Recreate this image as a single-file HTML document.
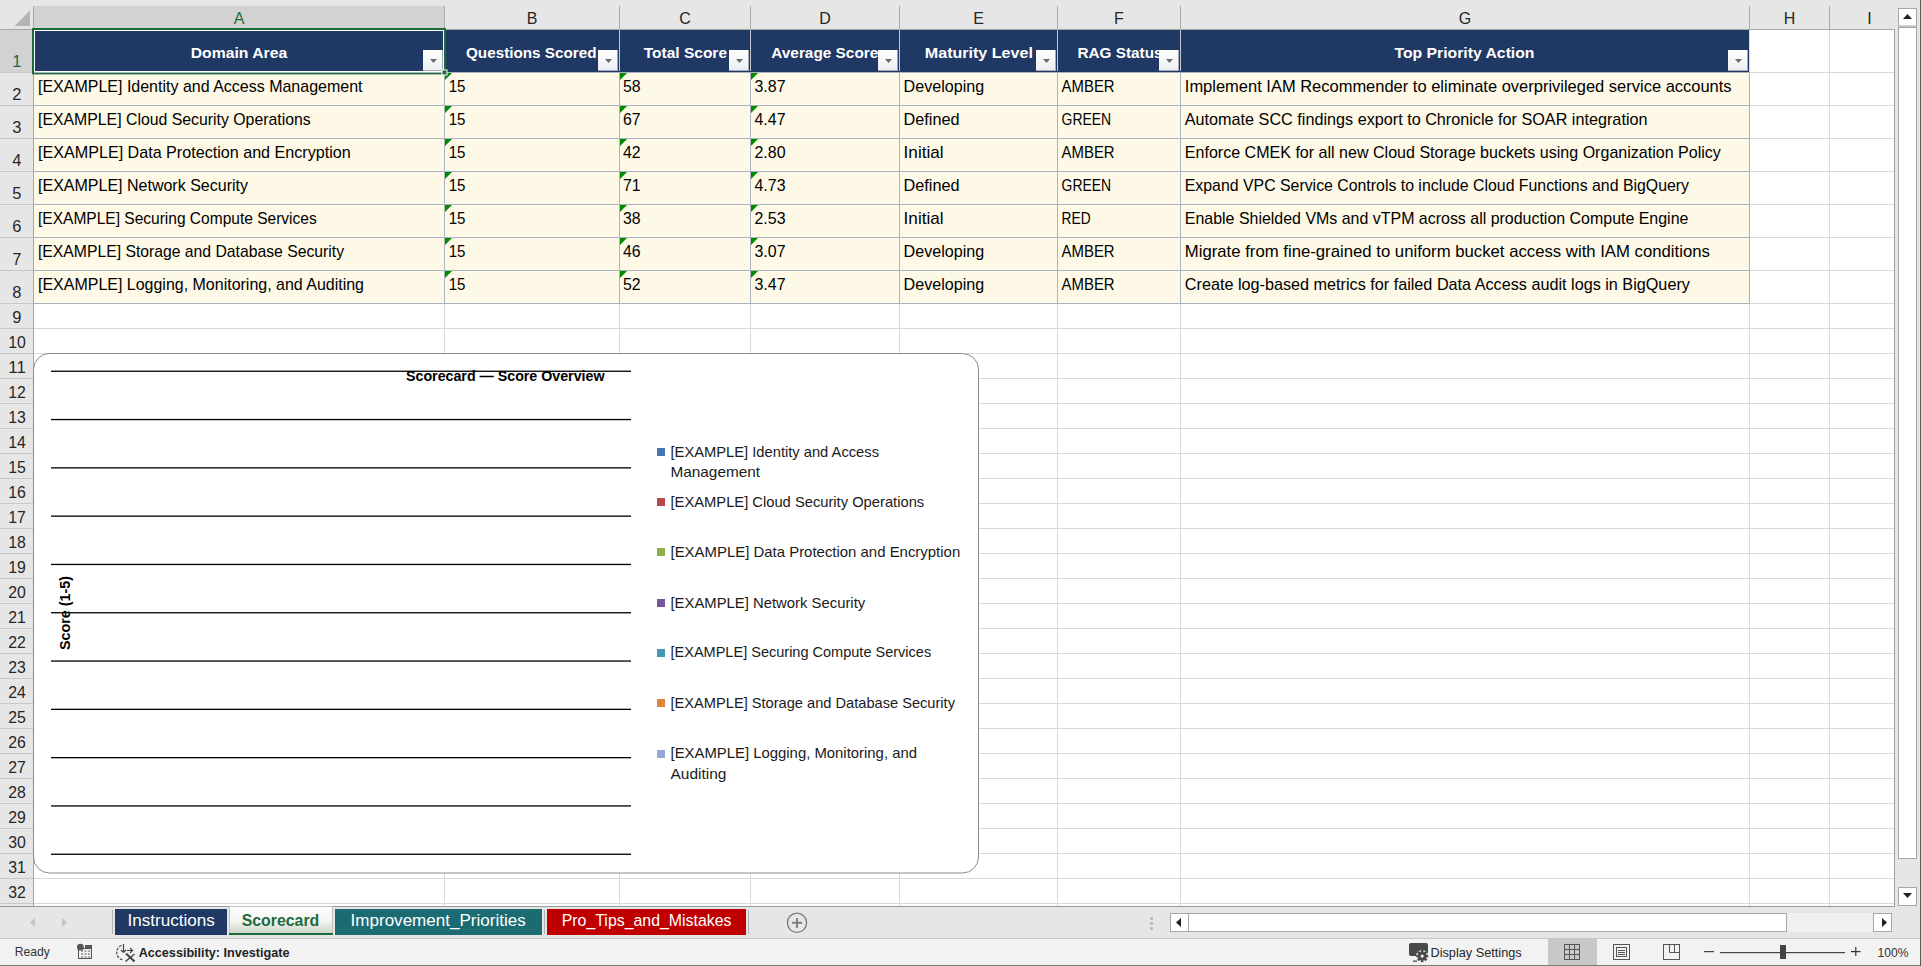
<!DOCTYPE html>
<html><head><meta charset="utf-8"><title>Scorecard</title>
<style>
html,body{margin:0;padding:0;background:#fff;overflow:hidden;}
svg{display:block;font-family:"Liberation Sans",sans-serif;}
</style></head>
<body>
<svg width="1921" height="966" viewBox="0 0 1921 966">
<rect x="0" y="0" width="1921" height="966" fill="#ffffff"/>
<rect x="0" y="0" width="1921" height="29" fill="#e6e6e6"/>
<rect x="34" y="6" width="410" height="23" fill="#d2d2d2"/>
<polygon points="14.5,26 30,26 30,10.5" fill="#b4b4b4"/>
<rect x="0" y="29" width="33" height="877" fill="#e6e6e6"/>
<rect x="0" y="30" width="33" height="42" fill="#d2d2d2"/>
<rect x="444" y="29" width="1" height="877" fill="#dadada"/>
<rect x="619" y="29" width="1" height="877" fill="#dadada"/>
<rect x="750" y="29" width="1" height="877" fill="#dadada"/>
<rect x="899" y="29" width="1" height="877" fill="#dadada"/>
<rect x="1057" y="29" width="1" height="877" fill="#dadada"/>
<rect x="1180" y="29" width="1" height="877" fill="#dadada"/>
<rect x="1749" y="29" width="1" height="877" fill="#dadada"/>
<rect x="1829" y="29" width="1" height="877" fill="#dadada"/>
<rect x="1894" y="29" width="1" height="877" fill="#dadada"/>
<rect x="33" y="72" width="1861" height="1" fill="#dadada"/>
<rect x="33" y="105" width="1861" height="1" fill="#dadada"/>
<rect x="33" y="138" width="1861" height="1" fill="#dadada"/>
<rect x="33" y="171" width="1861" height="1" fill="#dadada"/>
<rect x="33" y="204" width="1861" height="1" fill="#dadada"/>
<rect x="33" y="237" width="1861" height="1" fill="#dadada"/>
<rect x="33" y="270" width="1861" height="1" fill="#dadada"/>
<rect x="33" y="303" width="1861" height="1" fill="#dadada"/>
<rect x="33" y="328" width="1861" height="1" fill="#dadada"/>
<rect x="33" y="353" width="1861" height="1" fill="#dadada"/>
<rect x="33" y="378" width="1861" height="1" fill="#dadada"/>
<rect x="33" y="403" width="1861" height="1" fill="#dadada"/>
<rect x="33" y="428" width="1861" height="1" fill="#dadada"/>
<rect x="33" y="453" width="1861" height="1" fill="#dadada"/>
<rect x="33" y="478" width="1861" height="1" fill="#dadada"/>
<rect x="33" y="503" width="1861" height="1" fill="#dadada"/>
<rect x="33" y="528" width="1861" height="1" fill="#dadada"/>
<rect x="33" y="553" width="1861" height="1" fill="#dadada"/>
<rect x="33" y="578" width="1861" height="1" fill="#dadada"/>
<rect x="33" y="603" width="1861" height="1" fill="#dadada"/>
<rect x="33" y="628" width="1861" height="1" fill="#dadada"/>
<rect x="33" y="653" width="1861" height="1" fill="#dadada"/>
<rect x="33" y="678" width="1861" height="1" fill="#dadada"/>
<rect x="33" y="703" width="1861" height="1" fill="#dadada"/>
<rect x="33" y="728" width="1861" height="1" fill="#dadada"/>
<rect x="33" y="753" width="1861" height="1" fill="#dadada"/>
<rect x="33" y="778" width="1861" height="1" fill="#dadada"/>
<rect x="33" y="803" width="1861" height="1" fill="#dadada"/>
<rect x="33" y="828" width="1861" height="1" fill="#dadada"/>
<rect x="33" y="853" width="1861" height="1" fill="#dadada"/>
<rect x="33" y="878" width="1861" height="1" fill="#dadada"/>
<rect x="33" y="903" width="1861" height="1" fill="#dadada"/>
<rect x="34" y="30" width="1715" height="42" fill="#203864"/>
<rect x="34" y="73" width="1715" height="230" fill="#fef8e6"/>
<rect x="444" y="72" width="1" height="232" fill="#a9b3c1"/>
<rect x="619" y="72" width="1" height="232" fill="#a9b3c1"/>
<rect x="750" y="72" width="1" height="232" fill="#a9b3c1"/>
<rect x="899" y="72" width="1" height="232" fill="#a9b3c1"/>
<rect x="1057" y="72" width="1" height="232" fill="#a9b3c1"/>
<rect x="1180" y="72" width="1" height="232" fill="#a9b3c1"/>
<rect x="1749" y="72" width="1" height="232" fill="#a9b3c1"/>
<rect x="33" y="72" width="1717" height="1" fill="#a9b3c1"/>
<rect x="33" y="105" width="1717" height="1" fill="#a9b3c1"/>
<rect x="33" y="138" width="1717" height="1" fill="#a9b3c1"/>
<rect x="33" y="171" width="1717" height="1" fill="#a9b3c1"/>
<rect x="33" y="204" width="1717" height="1" fill="#a9b3c1"/>
<rect x="33" y="237" width="1717" height="1" fill="#a9b3c1"/>
<rect x="33" y="270" width="1717" height="1" fill="#a9b3c1"/>
<rect x="33" y="303" width="1717" height="1" fill="#a9b3c1"/>
<rect x="444" y="30" width="1" height="41" fill="#c3cad6"/>
<rect x="619" y="30" width="1" height="41" fill="#c3cad6"/>
<rect x="750" y="30" width="1" height="41" fill="#c3cad6"/>
<rect x="899" y="30" width="1" height="41" fill="#c3cad6"/>
<rect x="1057" y="30" width="1" height="41" fill="#c3cad6"/>
<rect x="1180" y="30" width="1" height="41" fill="#c3cad6"/>
<rect x="33" y="6" width="1" height="23" fill="#ababab"/>
<rect x="444" y="6" width="1" height="23" fill="#ababab"/>
<rect x="619" y="6" width="1" height="23" fill="#ababab"/>
<rect x="750" y="6" width="1" height="23" fill="#ababab"/>
<rect x="899" y="6" width="1" height="23" fill="#ababab"/>
<rect x="1057" y="6" width="1" height="23" fill="#ababab"/>
<rect x="1180" y="6" width="1" height="23" fill="#ababab"/>
<rect x="1749" y="6" width="1" height="23" fill="#ababab"/>
<rect x="1829" y="6" width="1" height="23" fill="#ababab"/>
<rect x="0" y="29" width="1894" height="1" fill="#a6a6a6"/>
<rect x="0" y="72" width="33" height="1" fill="#c8c8c8"/>
<rect x="0" y="105" width="33" height="1" fill="#c8c8c8"/>
<rect x="0" y="138" width="33" height="1" fill="#c8c8c8"/>
<rect x="0" y="171" width="33" height="1" fill="#c8c8c8"/>
<rect x="0" y="204" width="33" height="1" fill="#c8c8c8"/>
<rect x="0" y="237" width="33" height="1" fill="#c8c8c8"/>
<rect x="0" y="270" width="33" height="1" fill="#c8c8c8"/>
<rect x="0" y="303" width="33" height="1" fill="#c8c8c8"/>
<rect x="0" y="328" width="33" height="1" fill="#c8c8c8"/>
<rect x="0" y="353" width="33" height="1" fill="#c8c8c8"/>
<rect x="0" y="378" width="33" height="1" fill="#c8c8c8"/>
<rect x="0" y="403" width="33" height="1" fill="#c8c8c8"/>
<rect x="0" y="428" width="33" height="1" fill="#c8c8c8"/>
<rect x="0" y="453" width="33" height="1" fill="#c8c8c8"/>
<rect x="0" y="478" width="33" height="1" fill="#c8c8c8"/>
<rect x="0" y="503" width="33" height="1" fill="#c8c8c8"/>
<rect x="0" y="528" width="33" height="1" fill="#c8c8c8"/>
<rect x="0" y="553" width="33" height="1" fill="#c8c8c8"/>
<rect x="0" y="578" width="33" height="1" fill="#c8c8c8"/>
<rect x="0" y="603" width="33" height="1" fill="#c8c8c8"/>
<rect x="0" y="628" width="33" height="1" fill="#c8c8c8"/>
<rect x="0" y="653" width="33" height="1" fill="#c8c8c8"/>
<rect x="0" y="678" width="33" height="1" fill="#c8c8c8"/>
<rect x="0" y="703" width="33" height="1" fill="#c8c8c8"/>
<rect x="0" y="728" width="33" height="1" fill="#c8c8c8"/>
<rect x="0" y="753" width="33" height="1" fill="#c8c8c8"/>
<rect x="0" y="778" width="33" height="1" fill="#c8c8c8"/>
<rect x="0" y="803" width="33" height="1" fill="#c8c8c8"/>
<rect x="0" y="828" width="33" height="1" fill="#c8c8c8"/>
<rect x="0" y="853" width="33" height="1" fill="#c8c8c8"/>
<rect x="0" y="878" width="33" height="1" fill="#c8c8c8"/>
<rect x="0" y="903" width="33" height="1" fill="#c8c8c8"/>
<rect x="33" y="29" width="1" height="877" fill="#a6a6a6"/>
<rect x="1894" y="29" width="1" height="877" fill="#a0a0a0"/>
<text x="239.0" y="24.0" font-size="16" fill="#1e6b41" text-anchor="middle">A</text>
<text x="532.0" y="24.0" font-size="16" fill="#262626" text-anchor="middle">B</text>
<text x="685.0" y="24.0" font-size="16" fill="#262626" text-anchor="middle">C</text>
<text x="825.0" y="24.0" font-size="16" fill="#262626" text-anchor="middle">D</text>
<text x="978.5" y="24.0" font-size="16" fill="#262626" text-anchor="middle">E</text>
<text x="1119.0" y="24.0" font-size="16" fill="#262626" text-anchor="middle">F</text>
<text x="1465.0" y="24.0" font-size="16" fill="#262626" text-anchor="middle">G</text>
<text x="1789.5" y="24.0" font-size="16" fill="#262626" text-anchor="middle">H</text>
<text x="1869.5" y="24.0" font-size="16" fill="#262626" text-anchor="middle">I</text>
<text x="16.8" y="67.0" font-size="16.5" fill="#1e6b41" text-anchor="middle">1</text>
<text x="16.8" y="100.0" font-size="16.5" fill="#262626" text-anchor="middle">2</text>
<text x="16.8" y="133.0" font-size="16.5" fill="#262626" text-anchor="middle">3</text>
<text x="16.8" y="166.0" font-size="16.5" fill="#262626" text-anchor="middle">4</text>
<text x="16.8" y="199.0" font-size="16.5" fill="#262626" text-anchor="middle">5</text>
<text x="16.8" y="232.0" font-size="16.5" fill="#262626" text-anchor="middle">6</text>
<text x="16.8" y="265.0" font-size="16.5" fill="#262626" text-anchor="middle">7</text>
<text x="16.8" y="298.0" font-size="16.5" fill="#262626" text-anchor="middle">8</text>
<text x="16.8" y="322.5" font-size="16.5" fill="#262626" text-anchor="middle">9</text>
<text x="8.3" y="347.5" font-size="16.5" fill="#262626" textLength="17.6" lengthAdjust="spacingAndGlyphs">10</text>
<text x="8.3" y="372.5" font-size="16.5" fill="#262626" textLength="17.6" lengthAdjust="spacingAndGlyphs">11</text>
<text x="8.3" y="397.5" font-size="16.5" fill="#262626" textLength="17.6" lengthAdjust="spacingAndGlyphs">12</text>
<text x="8.3" y="422.5" font-size="16.5" fill="#262626" textLength="17.6" lengthAdjust="spacingAndGlyphs">13</text>
<text x="8.3" y="447.5" font-size="16.5" fill="#262626" textLength="17.6" lengthAdjust="spacingAndGlyphs">14</text>
<text x="8.3" y="472.5" font-size="16.5" fill="#262626" textLength="17.6" lengthAdjust="spacingAndGlyphs">15</text>
<text x="8.3" y="497.5" font-size="16.5" fill="#262626" textLength="17.6" lengthAdjust="spacingAndGlyphs">16</text>
<text x="8.3" y="522.5" font-size="16.5" fill="#262626" textLength="17.6" lengthAdjust="spacingAndGlyphs">17</text>
<text x="8.3" y="547.5" font-size="16.5" fill="#262626" textLength="17.6" lengthAdjust="spacingAndGlyphs">18</text>
<text x="8.3" y="572.5" font-size="16.5" fill="#262626" textLength="17.6" lengthAdjust="spacingAndGlyphs">19</text>
<text x="8.3" y="597.5" font-size="16.5" fill="#262626" textLength="17.6" lengthAdjust="spacingAndGlyphs">20</text>
<text x="8.3" y="622.5" font-size="16.5" fill="#262626" textLength="17.6" lengthAdjust="spacingAndGlyphs">21</text>
<text x="8.3" y="647.5" font-size="16.5" fill="#262626" textLength="17.6" lengthAdjust="spacingAndGlyphs">22</text>
<text x="8.3" y="672.5" font-size="16.5" fill="#262626" textLength="17.6" lengthAdjust="spacingAndGlyphs">23</text>
<text x="8.3" y="697.5" font-size="16.5" fill="#262626" textLength="17.6" lengthAdjust="spacingAndGlyphs">24</text>
<text x="8.3" y="722.5" font-size="16.5" fill="#262626" textLength="17.6" lengthAdjust="spacingAndGlyphs">25</text>
<text x="8.3" y="747.5" font-size="16.5" fill="#262626" textLength="17.6" lengthAdjust="spacingAndGlyphs">26</text>
<text x="8.3" y="772.5" font-size="16.5" fill="#262626" textLength="17.6" lengthAdjust="spacingAndGlyphs">27</text>
<text x="8.3" y="797.5" font-size="16.5" fill="#262626" textLength="17.6" lengthAdjust="spacingAndGlyphs">28</text>
<text x="8.3" y="822.5" font-size="16.5" fill="#262626" textLength="17.6" lengthAdjust="spacingAndGlyphs">29</text>
<text x="8.3" y="847.5" font-size="16.5" fill="#262626" textLength="17.6" lengthAdjust="spacingAndGlyphs">30</text>
<text x="8.3" y="872.5" font-size="16.5" fill="#262626" textLength="17.6" lengthAdjust="spacingAndGlyphs">31</text>
<text x="8.3" y="897.5" font-size="16.5" fill="#262626" textLength="17.6" lengthAdjust="spacingAndGlyphs">32</text>
<text x="190.7" y="57.8" font-size="15.4" font-weight="bold" fill="#ffffff" textLength="96.5" lengthAdjust="spacingAndGlyphs">Domain Area</text>
<text x="466.0" y="57.8" font-size="15.4" font-weight="bold" fill="#ffffff" textLength="130.5" lengthAdjust="spacingAndGlyphs">Questions Scored</text>
<text x="643.8" y="57.8" font-size="15.4" font-weight="bold" fill="#ffffff" textLength="83.2" lengthAdjust="spacingAndGlyphs">Total Score</text>
<text x="771.3" y="57.8" font-size="15.4" font-weight="bold" fill="#ffffff" textLength="107.0" lengthAdjust="spacingAndGlyphs">Average Score</text>
<text x="924.8" y="57.8" font-size="15.4" font-weight="bold" fill="#ffffff" textLength="108.1" lengthAdjust="spacingAndGlyphs">Maturity Level</text>
<text x="1077.5" y="57.8" font-size="15.4" font-weight="bold" fill="#ffffff" textLength="85.0" lengthAdjust="spacingAndGlyphs">RAG Status</text>
<text x="1394.5" y="57.8" font-size="15.4" font-weight="bold" fill="#ffffff" textLength="140.0" lengthAdjust="spacingAndGlyphs">Top Priority Action</text>
<defs><linearGradient id="fb" x1="0" y1="0" x2="0" y2="1"><stop offset="0" stop-color="#ffffff"/><stop offset="1" stop-color="#eceef2"/></linearGradient><linearGradient id="tabg" x1="0" y1="0" x2="0" y2="1"><stop offset="0" stop-color="#ffffff"/><stop offset="0.5" stop-color="#f4f6f3"/><stop offset="1" stop-color="#c9d3c6"/></linearGradient></defs>
<rect x="423" y="50" width="20" height="21" fill="url(#fb)"/>
<rect x="423" y="70" width="20" height="1" fill="#a4abb4"/>
<rect x="442" y="50" width="1" height="21" fill="#a4abb4"/>
<polygon points="430,59 437,59 433.5,63" fill="#6b6b6b"/>
<rect x="598" y="50" width="20" height="21" fill="url(#fb)"/>
<rect x="598" y="70" width="20" height="1" fill="#a4abb4"/>
<rect x="617" y="50" width="1" height="21" fill="#a4abb4"/>
<polygon points="605,59 612,59 608.5,63" fill="#6b6b6b"/>
<rect x="729" y="50" width="20" height="21" fill="url(#fb)"/>
<rect x="729" y="70" width="20" height="1" fill="#a4abb4"/>
<rect x="748" y="50" width="1" height="21" fill="#a4abb4"/>
<polygon points="736,59 743,59 739.5,63" fill="#6b6b6b"/>
<rect x="878" y="50" width="20" height="21" fill="url(#fb)"/>
<rect x="878" y="70" width="20" height="1" fill="#a4abb4"/>
<rect x="897" y="50" width="1" height="21" fill="#a4abb4"/>
<polygon points="885,59 892,59 888.5,63" fill="#6b6b6b"/>
<rect x="1036" y="50" width="20" height="21" fill="url(#fb)"/>
<rect x="1036" y="70" width="20" height="1" fill="#a4abb4"/>
<rect x="1055" y="50" width="1" height="21" fill="#a4abb4"/>
<polygon points="1043,59 1050,59 1046.5,63" fill="#6b6b6b"/>
<rect x="1159" y="50" width="20" height="21" fill="url(#fb)"/>
<rect x="1159" y="70" width="20" height="1" fill="#a4abb4"/>
<rect x="1178" y="50" width="1" height="21" fill="#a4abb4"/>
<polygon points="1166,59 1173,59 1169.5,63" fill="#6b6b6b"/>
<rect x="1728" y="50" width="20" height="21" fill="url(#fb)"/>
<rect x="1728" y="70" width="20" height="1" fill="#a4abb4"/>
<rect x="1747" y="50" width="1" height="21" fill="#a4abb4"/>
<polygon points="1735,59 1742,59 1738.5,63" fill="#6b6b6b"/>
<text x="38.0" y="92.0" font-size="16.1" fill="#000" textLength="324.5" lengthAdjust="spacingAndGlyphs">[EXAMPLE] Identity and Access Management</text>
<text x="448.7" y="92.0" font-size="16.1" fill="#000" textLength="16.8" lengthAdjust="spacingAndGlyphs">15</text>
<text x="623.0" y="92.0" font-size="16.1" fill="#000" textLength="17.6" lengthAdjust="spacingAndGlyphs">58</text>
<text x="754.5" y="92.0" font-size="16.1" fill="#000" textLength="31.0" lengthAdjust="spacingAndGlyphs">3.87</text>
<text x="903.6" y="92.0" font-size="16.1" fill="#000" textLength="80.6" lengthAdjust="spacingAndGlyphs">Developing</text>
<text x="1061.6" y="92.0" font-size="16.1" fill="#000" textLength="53.0" lengthAdjust="spacingAndGlyphs">AMBER</text>
<text x="1184.8" y="92.0" font-size="16.1" fill="#000" textLength="546.8" lengthAdjust="spacingAndGlyphs">Implement IAM Recommender to eliminate overprivileged service accounts</text>
<polygon points="445,73 452,73 445,80" fill="#008a00"/>
<polygon points="620,73 627,73 620,80" fill="#008a00"/>
<polygon points="751,73 758,73 751,80" fill="#008a00"/>
<text x="38.0" y="125.0" font-size="16.1" fill="#000" textLength="272.7" lengthAdjust="spacingAndGlyphs">[EXAMPLE] Cloud Security Operations</text>
<text x="448.7" y="125.0" font-size="16.1" fill="#000" textLength="16.8" lengthAdjust="spacingAndGlyphs">15</text>
<text x="623.0" y="125.0" font-size="16.1" fill="#000" textLength="17.6" lengthAdjust="spacingAndGlyphs">67</text>
<text x="754.5" y="125.0" font-size="16.1" fill="#000" textLength="31.0" lengthAdjust="spacingAndGlyphs">4.47</text>
<text x="903.6" y="125.0" font-size="16.1" fill="#000" textLength="56.0" lengthAdjust="spacingAndGlyphs">Defined</text>
<text x="1061.6" y="125.0" font-size="16.1" fill="#000" textLength="49.6" lengthAdjust="spacingAndGlyphs">GREEN</text>
<text x="1184.8" y="125.0" font-size="16.1" fill="#000" textLength="462.7" lengthAdjust="spacingAndGlyphs">Automate SCC findings export to Chronicle for SOAR integration</text>
<polygon points="445,106 452,106 445,113" fill="#008a00"/>
<polygon points="620,106 627,106 620,113" fill="#008a00"/>
<polygon points="751,106 758,106 751,113" fill="#008a00"/>
<text x="38.0" y="158.0" font-size="16.1" fill="#000" textLength="312.7" lengthAdjust="spacingAndGlyphs">[EXAMPLE] Data Protection and Encryption</text>
<text x="448.7" y="158.0" font-size="16.1" fill="#000" textLength="16.8" lengthAdjust="spacingAndGlyphs">15</text>
<text x="623.0" y="158.0" font-size="16.1" fill="#000" textLength="17.6" lengthAdjust="spacingAndGlyphs">42</text>
<text x="754.5" y="158.0" font-size="16.1" fill="#000" textLength="31.0" lengthAdjust="spacingAndGlyphs">2.80</text>
<text x="903.6" y="158.0" font-size="16.1" fill="#000" textLength="40.0" lengthAdjust="spacingAndGlyphs">Initial</text>
<text x="1061.6" y="158.0" font-size="16.1" fill="#000" textLength="53.0" lengthAdjust="spacingAndGlyphs">AMBER</text>
<text x="1184.8" y="158.0" font-size="16.1" fill="#000" textLength="536.1" lengthAdjust="spacingAndGlyphs">Enforce CMEK for all new Cloud Storage buckets using Organization Policy</text>
<polygon points="445,139 452,139 445,146" fill="#008a00"/>
<polygon points="620,139 627,139 620,146" fill="#008a00"/>
<polygon points="751,139 758,139 751,146" fill="#008a00"/>
<text x="38.0" y="191.0" font-size="16.1" fill="#000" textLength="210.0" lengthAdjust="spacingAndGlyphs">[EXAMPLE] Network Security</text>
<text x="448.7" y="191.0" font-size="16.1" fill="#000" textLength="16.8" lengthAdjust="spacingAndGlyphs">15</text>
<text x="623.0" y="191.0" font-size="16.1" fill="#000" textLength="17.6" lengthAdjust="spacingAndGlyphs">71</text>
<text x="754.5" y="191.0" font-size="16.1" fill="#000" textLength="31.0" lengthAdjust="spacingAndGlyphs">4.73</text>
<text x="903.6" y="191.0" font-size="16.1" fill="#000" textLength="56.0" lengthAdjust="spacingAndGlyphs">Defined</text>
<text x="1061.6" y="191.0" font-size="16.1" fill="#000" textLength="49.6" lengthAdjust="spacingAndGlyphs">GREEN</text>
<text x="1184.8" y="191.0" font-size="16.1" fill="#000" textLength="504.2" lengthAdjust="spacingAndGlyphs">Expand VPC Service Controls to include Cloud Functions and BigQuery</text>
<polygon points="445,172 452,172 445,179" fill="#008a00"/>
<polygon points="620,172 627,172 620,179" fill="#008a00"/>
<polygon points="751,172 758,172 751,179" fill="#008a00"/>
<text x="38.0" y="224.0" font-size="16.1" fill="#000" textLength="278.7" lengthAdjust="spacingAndGlyphs">[EXAMPLE] Securing Compute Services</text>
<text x="448.7" y="224.0" font-size="16.1" fill="#000" textLength="16.8" lengthAdjust="spacingAndGlyphs">15</text>
<text x="623.0" y="224.0" font-size="16.1" fill="#000" textLength="17.6" lengthAdjust="spacingAndGlyphs">38</text>
<text x="754.5" y="224.0" font-size="16.1" fill="#000" textLength="31.0" lengthAdjust="spacingAndGlyphs">2.53</text>
<text x="903.6" y="224.0" font-size="16.1" fill="#000" textLength="40.0" lengthAdjust="spacingAndGlyphs">Initial</text>
<text x="1061.6" y="224.0" font-size="16.1" fill="#000" textLength="29.0" lengthAdjust="spacingAndGlyphs">RED</text>
<text x="1184.8" y="224.0" font-size="16.1" fill="#000" textLength="503.6" lengthAdjust="spacingAndGlyphs">Enable Shielded VMs and vTPM across all production Compute Engine</text>
<polygon points="445,205 452,205 445,212" fill="#008a00"/>
<polygon points="620,205 627,205 620,212" fill="#008a00"/>
<polygon points="751,205 758,205 751,212" fill="#008a00"/>
<text x="38.0" y="257.0" font-size="16.1" fill="#000" textLength="306.0" lengthAdjust="spacingAndGlyphs">[EXAMPLE] Storage and Database Security</text>
<text x="448.7" y="257.0" font-size="16.1" fill="#000" textLength="16.8" lengthAdjust="spacingAndGlyphs">15</text>
<text x="623.0" y="257.0" font-size="16.1" fill="#000" textLength="17.6" lengthAdjust="spacingAndGlyphs">46</text>
<text x="754.5" y="257.0" font-size="16.1" fill="#000" textLength="31.0" lengthAdjust="spacingAndGlyphs">3.07</text>
<text x="903.6" y="257.0" font-size="16.1" fill="#000" textLength="80.6" lengthAdjust="spacingAndGlyphs">Developing</text>
<text x="1061.6" y="257.0" font-size="16.1" fill="#000" textLength="53.0" lengthAdjust="spacingAndGlyphs">AMBER</text>
<text x="1184.8" y="257.0" font-size="16.1" fill="#000" textLength="525.1" lengthAdjust="spacingAndGlyphs">Migrate from fine-grained to uniform bucket access with IAM conditions</text>
<polygon points="445,238 452,238 445,245" fill="#008a00"/>
<polygon points="620,238 627,238 620,245" fill="#008a00"/>
<polygon points="751,238 758,238 751,245" fill="#008a00"/>
<text x="38.0" y="290.0" font-size="16.1" fill="#000" textLength="326.0" lengthAdjust="spacingAndGlyphs">[EXAMPLE] Logging, Monitoring, and Auditing</text>
<text x="448.7" y="290.0" font-size="16.1" fill="#000" textLength="16.8" lengthAdjust="spacingAndGlyphs">15</text>
<text x="623.0" y="290.0" font-size="16.1" fill="#000" textLength="17.6" lengthAdjust="spacingAndGlyphs">52</text>
<text x="754.5" y="290.0" font-size="16.1" fill="#000" textLength="31.0" lengthAdjust="spacingAndGlyphs">3.47</text>
<text x="903.6" y="290.0" font-size="16.1" fill="#000" textLength="80.6" lengthAdjust="spacingAndGlyphs">Developing</text>
<text x="1061.6" y="290.0" font-size="16.1" fill="#000" textLength="53.0" lengthAdjust="spacingAndGlyphs">AMBER</text>
<text x="1184.8" y="290.0" font-size="16.1" fill="#000" textLength="505.1" lengthAdjust="spacingAndGlyphs">Create log-based metrics for failed Data Access audit logs in BigQuery</text>
<polygon points="445,271 452,271 445,278" fill="#008a00"/>
<polygon points="620,271 627,271 620,278" fill="#008a00"/>
<polygon points="751,271 758,271 751,278" fill="#008a00"/>
<rect x="34" y="30" width="410" height="1" fill="#ffffff"/>
<rect x="34" y="30" width="1" height="41" fill="#ffffff"/>
<rect x="443" y="30" width="1" height="41" fill="#ffffff"/>
<rect x="34" y="71" width="410" height="1" fill="#ffffff"/>
<rect x="32" y="28" width="414" height="2" fill="#1d6b3d"/>
<rect x="32" y="28" width="2" height="46" fill="#1d6b3d"/>
<rect x="444" y="28" width="2" height="46" fill="#1d6b3d"/>
<rect x="32" y="73" width="414" height="1.4" fill="#1d6b3d"/>
<rect x="442" y="70" width="5" height="5" fill="#1d6b3d" stroke="#ffffff" stroke-width="1"/>
<rect x="33.5" y="353.5" width="945" height="519.5" rx="16" ry="16" fill="#ffffff" stroke="#8a8a8a" stroke-width="1"/>
<rect x="51" y="370.60" width="580" height="1.3" fill="#000"/>
<rect x="51" y="418.90" width="580" height="1.3" fill="#000"/>
<rect x="51" y="467.20" width="580" height="1.3" fill="#000"/>
<rect x="51" y="515.50" width="580" height="1.3" fill="#000"/>
<rect x="51" y="563.80" width="580" height="1.3" fill="#000"/>
<rect x="51" y="612.10" width="580" height="1.3" fill="#000"/>
<rect x="51" y="660.40" width="580" height="1.3" fill="#000"/>
<rect x="51" y="708.70" width="580" height="1.3" fill="#000"/>
<rect x="51" y="757.00" width="580" height="1.3" fill="#000"/>
<rect x="51" y="805.30" width="580" height="1.3" fill="#000"/>
<rect x="51" y="853.60" width="580" height="1.3" fill="#000"/>
<text x="406.0" y="381.4" font-size="14.5" font-weight="bold" fill="#000" textLength="198.5" lengthAdjust="spacingAndGlyphs">Scorecard — Score Overview</text>
<text x="0" y="0" font-size="15" font-weight="bold" fill="#000" textLength="74" lengthAdjust="spacingAndGlyphs" transform="translate(69.8,650) rotate(-90)">Score (1-5)</text>
<rect x="657" y="448" width="8" height="8" fill="#4676b3"/>
<text x="670.5" y="456.5" font-size="14.5" fill="#1a1a1a" textLength="208.5" lengthAdjust="spacingAndGlyphs">[EXAMPLE] Identity and Access</text>
<text x="670.5" y="476.8" font-size="14.5" fill="#1a1a1a" textLength="89.5" lengthAdjust="spacingAndGlyphs">Management</text>
<rect x="657" y="498" width="8" height="8" fill="#b8494a"/>
<text x="670.5" y="506.7" font-size="14.5" fill="#1a1a1a" textLength="253.7" lengthAdjust="spacingAndGlyphs">[EXAMPLE] Cloud Security Operations</text>
<rect x="657" y="548" width="8" height="8" fill="#8fb04f"/>
<text x="670.5" y="556.8" font-size="14.5" fill="#1a1a1a" textLength="289.7" lengthAdjust="spacingAndGlyphs">[EXAMPLE] Data Protection and Encryption</text>
<rect x="657" y="599" width="8" height="8" fill="#76599b"/>
<text x="670.5" y="608.0" font-size="14.5" fill="#1a1a1a" textLength="194.7" lengthAdjust="spacingAndGlyphs">[EXAMPLE] Network Security</text>
<rect x="657" y="649" width="8" height="8" fill="#4397b0"/>
<text x="670.5" y="657.4" font-size="14.5" fill="#1a1a1a" textLength="260.7" lengthAdjust="spacingAndGlyphs">[EXAMPLE] Securing Compute Services</text>
<rect x="657" y="699" width="8" height="8" fill="#e08539"/>
<text x="670.5" y="707.5" font-size="14.5" fill="#1a1a1a" textLength="284.5" lengthAdjust="spacingAndGlyphs">[EXAMPLE] Storage and Database Security</text>
<rect x="657" y="750" width="8" height="8" fill="#94aad6"/>
<text x="670.5" y="758.3" font-size="14.5" fill="#1a1a1a" textLength="246.5" lengthAdjust="spacingAndGlyphs">[EXAMPLE] Logging, Monitoring, and</text>
<text x="670.5" y="778.7" font-size="14.5" fill="#1a1a1a" textLength="55.9" lengthAdjust="spacingAndGlyphs">Auditing</text>
<rect x="1895" y="0" width="26" height="906" fill="#e6e6e6"/>
<rect x="1898.5" y="8.5" width="18" height="17.5" fill="#fff" stroke="#a6a6a6"/>
<polygon points="1903,19 1912,19 1907.5,14" fill="#222"/>
<rect x="1898.5" y="27.5" width="18" height="831" fill="#fff" stroke="#a6a6a6"/>
<rect x="1898.5" y="887.5" width="18" height="18" fill="#fff" stroke="#a6a6a6"/>
<polygon points="1903,893 1912,893 1907.5,898" fill="#222"/>
<rect x="1920" y="0" width="1" height="966" fill="#5a5a5a"/>
<rect x="0" y="906" width="1920" height="32" fill="#e6e6e6"/>
<rect x="0" y="906" width="1895" height="1" fill="#9a9a9a"/>
<rect x="0" y="938" width="1920" height="1" fill="#c8c8c8"/>
<polygon points="35,918 35,927 30,922.5" fill="#c4c4c4"/>
<polygon points="62,918 62,927 67,922.5" fill="#c4c4c4"/>
<rect x="112" y="910" width="1" height="24" fill="#b4b4b4"/>
<rect x="115" y="909" width="112" height="26" fill="#203864"/>
<text x="127.4" y="925.8" font-size="17.4" fill="#ffffff" textLength="87.4" lengthAdjust="spacingAndGlyphs">Instructions</text>
<rect x="229.5" y="906.5" width="103" height="28" fill="url(#tabg)" stroke="#c0c0c0"/>
<rect x="229" y="933" width="104" height="2" fill="#1d6b3d"/>
<text x="241.7" y="925.8" font-size="17.4" font-weight="bold" fill="#1e6b41" textLength="77.6" lengthAdjust="spacingAndGlyphs">Scorecard</text>
<rect x="335" y="909" width="207" height="26" fill="#1b6b73"/>
<text x="350.6" y="925.8" font-size="17.4" fill="#ffffff" textLength="175.1" lengthAdjust="spacingAndGlyphs">Improvement_Priorities</text>
<rect x="544" y="910" width="1" height="24" fill="#b4b4b4"/>
<rect x="547" y="909" width="199" height="26" fill="#c00000"/>
<text x="561.7" y="925.8" font-size="17.4" fill="#ffffff" textLength="169.8" lengthAdjust="spacingAndGlyphs">Pro_Tips_and_Mistakes</text>
<rect x="748" y="910" width="1" height="24" fill="#b4b4b4"/>
<circle cx="797" cy="922.8" r="9.6" fill="none" stroke="#7a7a7a" stroke-width="1.3"/>
<rect x="792" y="921.9" width="10" height="1.8" fill="#7a7a7a"/>
<rect x="796.1" y="918" width="1.8" height="10" fill="#7a7a7a"/>
<rect x="1150" y="917" width="3" height="3" fill="#bdbdbd"/>
<rect x="1150" y="922" width="3" height="3" fill="#bdbdbd"/>
<rect x="1150" y="927" width="3" height="3" fill="#bdbdbd"/>
<rect x="1170" y="913" width="722" height="19" fill="#f0f0f0"/>
<rect x="1170.5" y="913.5" width="18" height="18" fill="#fff" stroke="#a6a6a6"/>
<polygon points="1176,922.5 1181,918 1181,927" fill="#222"/>
<rect x="1188.5" y="913.5" width="598" height="18" fill="#fff" stroke="#a6a6a6"/>
<rect x="1873.5" y="913.5" width="18" height="18" fill="#fff" stroke="#a6a6a6"/>
<polygon points="1887,922.5 1882,918 1882,927" fill="#222"/>
<rect x="0" y="939" width="1920" height="27" fill="#f2f2f2"/>
<rect x="0" y="965" width="1920" height="1" fill="#7a7a7a"/>
<text x="14.7" y="956.4" font-size="12.6" fill="#333" textLength="35.2" lengthAdjust="spacingAndGlyphs">Ready</text>
<rect x="78.5" y="948.5" width="13" height="10" fill="#f2f2f2" stroke="#555" stroke-width="1"/>
<rect x="85" y="945" width="7" height="3.5" fill="#555"/>
<circle cx="80.4" cy="947.2" r="3.4" fill="#555"/>
<rect x="81" y="950.5" width="2.2" height="1" fill="#666"/>
<rect x="84.5" y="950.5" width="2.2" height="1" fill="#666"/>
<rect x="88" y="950.5" width="2.2" height="1" fill="#666"/>
<rect x="81" y="953.5" width="2.2" height="1" fill="#666"/>
<rect x="84.5" y="953.5" width="2.2" height="1" fill="#666"/>
<rect x="88" y="953.5" width="2.2" height="1" fill="#666"/>
<rect x="81" y="956.5" width="2.2" height="1" fill="#666"/>
<rect x="84.5" y="956.5" width="2.2" height="1" fill="#666"/>
<rect x="88" y="956.5" width="2.2" height="1" fill="#666"/>
<g fill="none" stroke="#444" stroke-width="1.2"><path d="M121.5 945.5 A7.5 7.5 0 0 0 122.5 959.8" stroke-dasharray="2.6 1.4"/><path d="M123.5 944 v8.5 M121 950 l2.5 2.5 l2.5 -2.5"/><path d="M127 950.5 h5 M130 948 l2.5 2.5 l-2.5 2.5"/><path d="M126 953.5 l8.5 8" stroke-width="2.2"/><path d="M125.5 961.5 l9 -7.5" stroke-width="1.4"/></g>
<text x="138.7" y="956.7" font-size="13.6" font-weight="bold" fill="#222" textLength="150.8" lengthAdjust="spacingAndGlyphs">Accessibility: Investigate</text>
<rect x="1409" y="943" width="19" height="13" fill="#4a4a4a" rx="2"/>
<circle cx="1422.2" cy="956.1" r="6.2" fill="#f2f2f2"/>
<rect x="-1.3" y="-6" width="2.6" height="3" fill="#4a4a4a" transform="translate(1422.2,956.1) rotate(0)"/><rect x="-1.3" y="-6" width="2.6" height="3" fill="#4a4a4a" transform="translate(1422.2,956.1) rotate(45)"/><rect x="-1.3" y="-6" width="2.6" height="3" fill="#4a4a4a" transform="translate(1422.2,956.1) rotate(90)"/><rect x="-1.3" y="-6" width="2.6" height="3" fill="#4a4a4a" transform="translate(1422.2,956.1) rotate(135)"/><rect x="-1.3" y="-6" width="2.6" height="3" fill="#4a4a4a" transform="translate(1422.2,956.1) rotate(180)"/><rect x="-1.3" y="-6" width="2.6" height="3" fill="#4a4a4a" transform="translate(1422.2,956.1) rotate(225)"/><rect x="-1.3" y="-6" width="2.6" height="3" fill="#4a4a4a" transform="translate(1422.2,956.1) rotate(270)"/><rect x="-1.3" y="-6" width="2.6" height="3" fill="#4a4a4a" transform="translate(1422.2,956.1) rotate(315)"/>
<circle cx="1422.2" cy="956.1" r="4.2" fill="#4a4a4a"/>
<circle cx="1422.2" cy="956.1" r="1.6" fill="#f2f2f2"/>
<rect x="1413" y="960.5" width="4" height="1.3" fill="#4a4a4a"/>
<text x="1430.5" y="956.6" font-size="12.8" fill="#262626" textLength="91.2" lengthAdjust="spacingAndGlyphs">Display Settings</text>
<rect x="1548" y="939" width="49" height="26" fill="#c8c8c8"/>
<g fill="none" stroke="#555" stroke-width="1"><rect x="1564.5" y="944.5" width="15" height="15"/><path d="M1569.5 944.5 v15 M1574.5 944.5 v15 M1564.5 949.5 h15 M1564.5 954.5 h15"/><rect x="1613.5" y="944.5" width="16" height="15"/><rect x="1616.5" y="947.5" width="10" height="9"/><path d="M1618 950.5 h7 M1618 952.5 h7 M1618 954.5 h7"/><rect x="1663.5" y="944.5" width="16" height="15"/><path d="M1669.5 944.5 v8 h10 M1674.5 944.5 v8"/></g>
<rect x="1704" y="951" width="10" height="1.2" fill="#444"/>
<rect x="1720" y="952" width="125" height="1.2" fill="#444"/>
<rect x="1780" y="945" width="6" height="14" fill="#444"/>
<rect x="1851" y="951" width="9.5" height="1.2" fill="#333"/>
<rect x="1855.2" y="947" width="1.2" height="9" fill="#333"/>
<text x="1877.5" y="957.0" font-size="12.9" fill="#333" textLength="31.0" lengthAdjust="spacingAndGlyphs">100%</text>
</svg>
</body></html>
